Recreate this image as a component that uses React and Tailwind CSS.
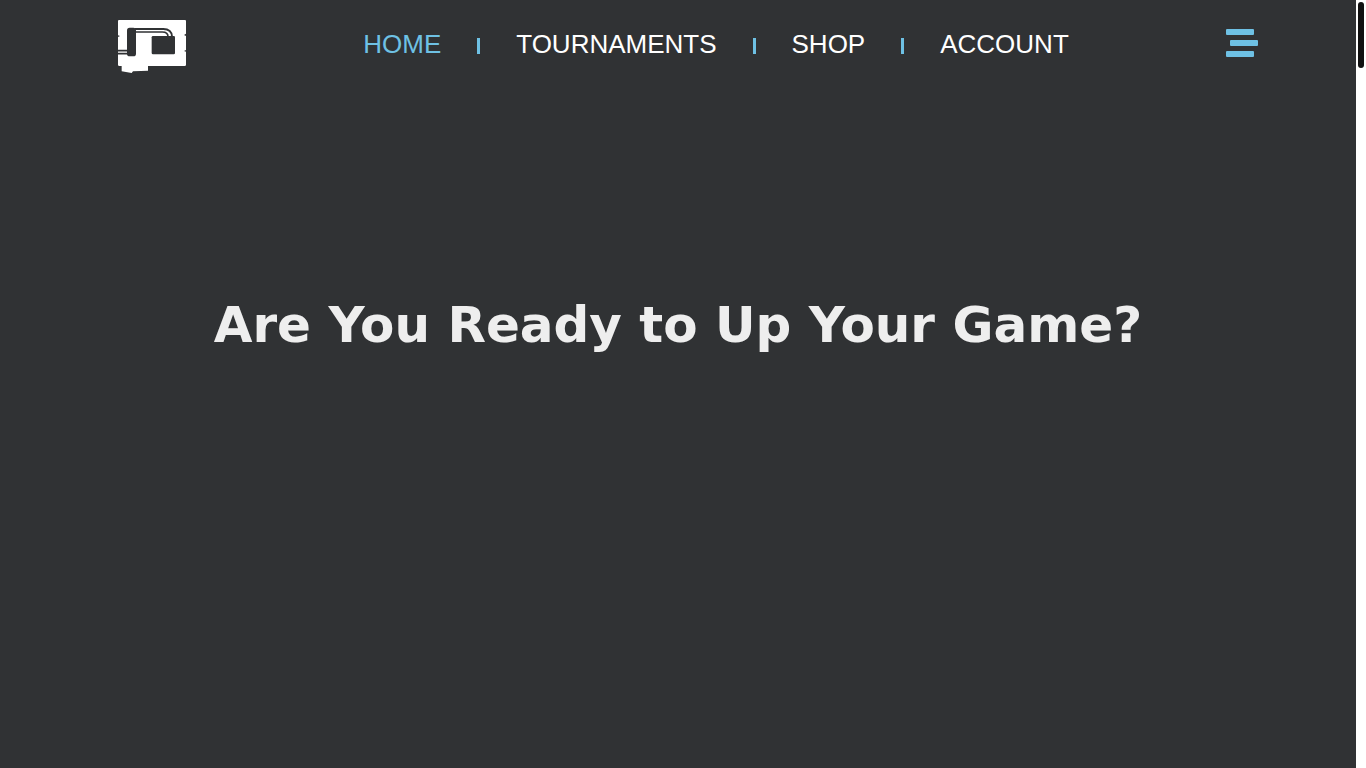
const LINKS = [
  { label: 'HOME', href: '#home', active: true },
  { label: 'TOURNAMENTS', href: '#tournaments' },
  { label: 'SHOP', href: '#shop' },
  { label: 'ACCOUNT', href: '#account' },
]

function Logo() {
  return (
    <svg viewBox="24 30 204 159" className="w-[68px] h-[53px]" aria-hidden="true">
      <path
        fill="#fff"
        d="M27 30H225Q228 30 228 33V71L222 75L228 78V120L222 123L228 125V164Q228 168 224 168H114V182L69 184L65 189L35 184V168H28Q24 168 24 164V81L30 78L24 76V33Q24 30 27 30Z"
      />
      <g fill="none" stroke="#303234">
        <path strokeWidth="6" d="M74 57H160C176 57 186 66 186 80" />
        <path strokeWidth="5" d="M74 66H157C168 66 174 72 174 80" />
        <path strokeWidth="5" d="M24 122H53M24 131H53" />
      </g>
      <g fill="#303234">
        <rect x="51" y="53" width="27" height="86" rx="8" />
        <rect x="125" y="78" width="70" height="55" rx="4" />
      </g>
    </svg>
  )
}

function MenuIcon() {
  return (
    <svg viewBox="0 0 32 28" className="w-8 h-7" fill="#6ec1e4" aria-hidden="true">
      <rect width="28" height="6" rx="1" />
      <rect x="4" y="11" width="28" height="6" rx="1" />
      <rect y="22" width="28" height="6" rx="1" />
    </svg>
  )
}

export default function App() {
  return (
    <div className="flex min-h-screen bg-[#303234]">
      <div className="flex-1">

        {/* Header */}
        <header className="flex items-start justify-between pt-5 pl-[118px] pr-[98px]">
          <a href="#home" aria-label="Home">
            <Logo />
          </a>

          <nav className="ml-5 pt-2" aria-label="Main">
            <ul className="flex items-center gap-9 font-['Liberation_Sans',sans-serif] text-[26px] leading-8">
              {LINKS.map(({ label, href, active }, i) => (
                <li key={label} className="flex items-center gap-9">
                  {i > 0 && <span className="mt-1 w-[3px] h-4 bg-[#6ec1e4]" />}
                  <a href={href} className={active ? 'text-[#6ec1e4]' : 'text-white'}>
                    {label}
                  </a>
                </li>
              ))}
            </ul>
          </nav>

          <button type="button" aria-label="Open menu" className="mt-[9px] cursor-pointer">
            <MenuIcon />
          </button>
        </header>

        {/* Hero */}
        <main className="pt-[220px] text-center">
          <h1 className="font-['DejaVu_Sans',sans-serif] text-[50px] leading-16 font-bold text-[#eeeeee] whitespace-nowrap">
            Are You Ready to Up Your Game?
          </h1>
        </main>
      </div>

      {/* Scroll track */}
      <div className="w-[10px] bg-white px-[2px] pt-[2px]" aria-hidden="true">
        <div className="h-[66px] rounded-full bg-[#111111]" />
      </div>
    </div>
  )
}
